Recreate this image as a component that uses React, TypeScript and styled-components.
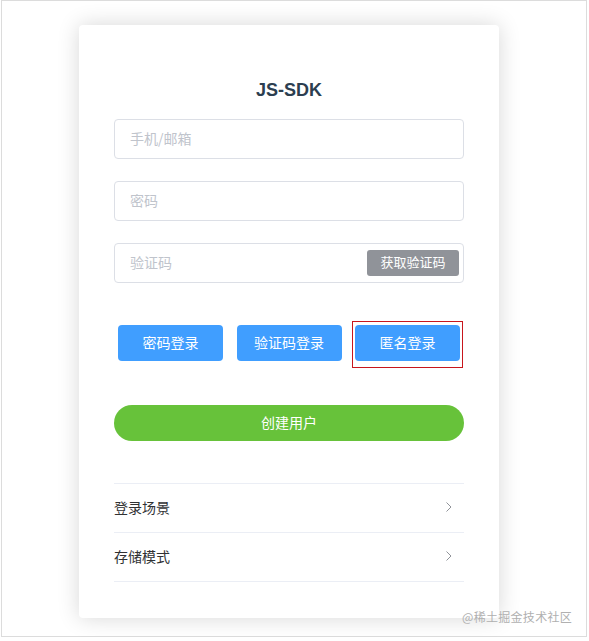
import React from "react";
import styled, { createGlobalStyle } from "styled-components";

const Global = createGlobalStyle`
  html, body { margin: 0; padding: 0; background: #fff; }
  body { font-family: "Liberation Sans", "Noto Sans CJK SC", sans-serif; }
  * { box-sizing: border-box; }
`;

const Frame = styled.div`
  position: relative;
  margin-left: 1px;
  width: 586px;
  height: 637px;
  border: 1px solid #dcdcdc;
  background: #fff;
  padding: 24px 0 0 77px;
`;

const Card = styled.div`
  width: 420px;
  height: 593px;
  background: #fff;
  border-radius: 4px;
  box-shadow: 0 0 22px rgba(0, 0, 0, 0.16);
  padding: 53px 35px 0;
  display: flex;
  flex-direction: column;
`;

const Title = styled.h3`
  margin: 0 0 17px;
  height: 24px;
  line-height: 24px;
  text-align: center;
  font-family: "Liberation Sans", Arial, sans-serif;
  font-size: 18px;
  font-weight: bold;
  color: #2c3e50;
`;

const Fields = styled.div`
  display: flex;
  flex-direction: column;
  gap: 22px;
`;

const Field = styled.div`
  height: 40px;
  border: 1px solid #dcdfe6;
  border-radius: 4px;
  display: flex;
  align-items: center;
  padding: 0 4px 2px 15px;
`;

const Input = styled.input`
  flex: 1;
  min-width: 0;
  border: none;
  outline: none;
  background: transparent;
  font-family: "Noto Sans CJK SC", sans-serif;
  font-size: 14px;
  line-height: 18px;
  height: 18px;
  color: #606266;
  padding: 0;
  &::placeholder { color: #c0c4cc; }
`;

const CodeButton = styled.button`
  width: 92px;
  height: 26px;
  margin-top: 2px;
  border: none;
  border-radius: 3px;
  background: #909399;
  color: #fff;
  font-family: "Noto Sans CJK SC", sans-serif;
  font-size: 13px;
  line-height: 24px;
  padding: 0 0 2px;
`;

const LoginRow = styled.div`
  margin-top: 42px;
  display: flex;
  justify-content: space-between;
  align-items: flex-start;
  padding: 0 4px;
  height: 36px;
`;

const LoginButton = styled.button`
  width: 105px;
  height: 36px;
  border: none;
  border-radius: 4px;
  background: #409eff;
  color: #fff;
  font-family: "Noto Sans CJK SC", sans-serif;
  font-size: 14px;
  line-height: 18px;
  padding: 0 0 2px;
`;

const Highlight = styled.div`
  position: relative;
  width: 105px;
  height: 36px;
  &::after {
    content: "";
    position: absolute;
    left: -3px;
    top: -4px;
    right: -3px;
    bottom: -7px;
    border: 1px solid #c8161d;
    pointer-events: none;
  }
`;

const CreateButton = styled.button`
  margin-top: 44px;
  height: 36px;
  border: none;
  border-radius: 20px;
  background: #67c23a;
  color: #fff;
  font-family: "Noto Sans CJK SC", sans-serif;
  font-size: 14px;
  line-height: 18px;
  width: 100%;
  padding: 0 0 2px;
`;

const List = styled.div`
  margin-top: 42px;
  border-top: 1px solid #ebeef5;
`;

const Row = styled.div`
  height: 49px;
  border-bottom: 1px solid #ebeef5;
  display: flex;
  align-items: center;
  justify-content: space-between;
  font-family: "Noto Sans CJK SC", sans-serif;
  font-size: 14px;
  line-height: 18px;
  color: #303133;
  padding: 0 11px 3px 0;
`;

const Watermark = styled.div`
  position: absolute;
  left: 460px;
  top: 608px;
  font-family: "Noto Sans CJK SC", sans-serif;
  font-size: 12px;
  line-height: 16px;
  color: #b0b0b0;
  letter-spacing: 0.3px;
`;

const Chevron = () => (
  <svg width="8" height="12" viewBox="0 0 8 12" fill="none">
    <path d="M1.5 1.5 L6 6 L1.5 10.5" stroke="#909399" strokeWidth="1" />
  </svg>
);

export default function App() {
  return (
    <>
      <Global />
      <Frame>
        <Card>
          <Title>JS-SDK</Title>
          <Fields>
            <Field>
              <Input placeholder="手机/邮箱" />
            </Field>
            <Field>
              <Input placeholder="密码" type="password" />
            </Field>
            <Field>
              <Input placeholder="验证码" />
              <CodeButton>获取验证码</CodeButton>
            </Field>
          </Fields>
          <LoginRow>
            <LoginButton>密码登录</LoginButton>
            <LoginButton>验证码登录</LoginButton>
            <Highlight>
              <LoginButton>匿名登录</LoginButton>
            </Highlight>
          </LoginRow>
          <CreateButton>创建用户</CreateButton>
          <List>
            <Row>
              <span>登录场景</span>
              <Chevron />
            </Row>
            <Row>
              <span>存储模式</span>
              <Chevron />
            </Row>
          </List>
        </Card>
        <Watermark>@稀土掘金技术社区</Watermark>
      </Frame>
    </>
  );
}
